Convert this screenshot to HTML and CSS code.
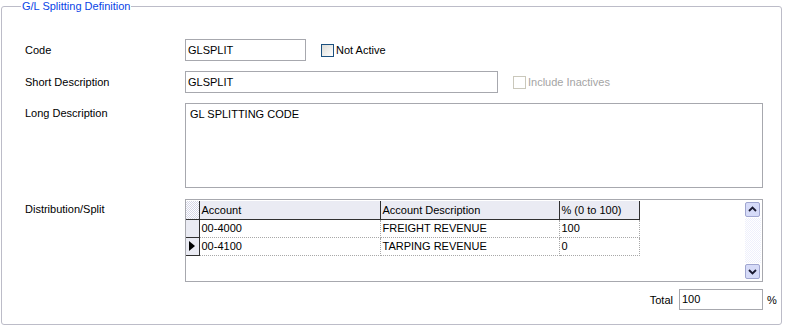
FILE: index.html
```html
<!DOCTYPE html>
<html lang="en">
<head>
  <meta charset="UTF-8" />
  <title>G/L Splitting Definition</title>
  <link rel="stylesheet" href="styles.css">
</head>
<body>
  <fieldset class="group">
    <legend class="group-title">G/L Splitting Definition</legend>

    <div class="row">
      <span class="label">Code</span>
      <div class="textbox code-box">GLSPLIT</div>
      <span class="check"><span class="check-box"></span>Not Active</span>
    </div>

    <div class="row row-short">
      <span class="label">Short Description</span>
      <div class="textbox short-box">GLSPLIT</div>
      <span class="check disabled"><span class="check-box"></span>Include Inactives</span>
    </div>

    <div class="row row-top row-long">
      <span class="label">Long Description</span>
      <div class="memo">GL SPLITTING CODE</div>
    </div>

    <div class="row row-top row-dist">
      <span class="label">Distribution/Split</span>
      <div class="grid">
        <table class="grid-table">
          <thead>
            <tr>
              <th class="corner"></th>
              <th class="col-account">Account</th>
              <th class="col-desc">Account Description</th>
              <th class="col-pct">% (0 to 100)</th>
            </tr>
          </thead>
          <tbody>
            <tr>
              <td class="rowhead"></td>
              <td>00-4000</td>
              <td>FREIGHT REVENUE</td>
              <td>100</td>
            </tr>
            <tr>
              <td class="rowhead current">
                <svg viewBox="0 0 6 10" class="pointer"><polygon points="0,0 6,5 0,10" /></svg>
              </td>
              <td>00-4100</td>
              <td>TARPING REVENUE</td>
              <td>0</td>
            </tr>
          </tbody>
        </table>
        <div class="grid-scroll">
          <div class="scroll-btn">
            <svg viewBox="0 0 13 13"><path d="M3 8l3.5-3.5L10 8" /></svg>
          </div>
          <div class="scroll-track"></div>
          <div class="scroll-btn">
            <svg viewBox="0 0 13 13"><path d="M3 5l3.5 3.5L10 5" /></svg>
          </div>
        </div>
      </div>
    </div>

    <div class="total-row">
      <span class="total-label">Total</span>
      <div class="textbox total-box">100</div>
      <span class="pct">%</span>
    </div>
  </fieldset>
</body>
</html>
```

FILE: styles.css
```css
body {
  margin: 0;
  background-color: #fff;
  color: #000;
  font-family: 'Liberation Sans', Arial, sans-serif;
  font-size: 11px;
}
.group {
  margin: 0 4px 0 1px;
  padding: 26px 4px 14px 23px;
  border: 1px solid #bcbcc8;
  border-radius: 3px;
  min-width: 0;
}
.group-title {
  color: #0a44e6;
  line-height: 13px;
  padding: 0 1px;
  margin-left: -4px;
}

.row {
  display: flex;
  align-items: center;
}
.row-top {
  align-items: flex-start;
}
.row-short {
  margin-top: 10px;
}
.row-long {
  margin-top: 10px;
}
.row-dist {
  margin-top: 11px;
}
.label {
  width: 160px;
  flex: none;
}
.row-top .label {
  padding-top: 4px;
}

.textbox {
  box-sizing: border-box;
  height: 22px;
  border: 1px solid #a7a8ae;
  padding: 0 2px;
  line-height: 20px;
  background: #fff;
}
.code-box {
  width: 121px;
}
.short-box {
  width: 313px;
}
.total-box {
  width: 84px;
  height: 21px;
  line-height: 19px;
}

.check {
  display: flex;
  align-items: center;
  gap: 2px;
  margin-left: 15px;
}
.check-box {
  box-sizing: border-box;
  width: 13px;
  height: 13px;
  border: 1px solid #1c5180;
  background: linear-gradient(135deg, #dcdcd7, #fff);
}
.check.disabled {
  color: #a4a4a4;
}
.check.disabled .check-box {
  border-color: #cac8bb;
  background: #fff;
}

.memo {
  box-sizing: border-box;
  width: 578px;
  height: 85px;
  border: 1px solid #a7a8ae;
  padding: 4px 4px;
}

.grid {
  box-sizing: border-box;
  width: 578px;
  height: 83px;
  border: 1px solid #a7a8ae;
  display: flex;
  padding-top: 1px;
}
.grid-table {
  border-collapse: collapse;
  align-self: flex-start;
}
.grid-table th,
.grid-table td {
  box-sizing: border-box;
  height: 18px;
  padding: 0 0 0 2px;
  text-align: left;
  font-weight: normal;
  white-space: nowrap;
}
.grid-table th {
  background: repeating-conic-gradient(#d5d6e6 0 25%, #fff 0 50%) 0 0 / 2px 2px;
  border-right: 1px solid #303030;
  border-bottom: 1px solid #303030;
}
.grid-table td {
  border-right: 1px dotted #a8a8a8;
  border-bottom: 1px dotted #a8a8a8;
}
.grid-table .corner,
.grid-table .rowhead {
  width: 13px;
  padding: 0;
  background: repeating-conic-gradient(#d5d6e6 0 25%, #fff 0 50%) 0 0 / 2px 2px;
  border-right: 1px solid #303030;
  border-bottom: 1px solid #303030;
}
.col-account {
  width: 181px;
}
.col-desc {
  width: 179px;
}
.col-pct {
  width: 80px;
}
.pointer {
  display: block;
  width: 6px;
  height: 10px;
  margin-left: 3px;
  fill: #000;
}

.grid-scroll {
  margin-left: auto;
  margin-right: 1px;
  width: 16px;
  display: flex;
  flex-direction: column;
  padding-top: 1px;
  padding-bottom: 2px;
}
.scroll-btn {
  box-sizing: border-box;
  width: 15px;
  height: 15px;
  border: 1px solid #a0a6d0;
  border-radius: 2px;
  background: #d6dbf8;
}
.scroll-btn svg {
  display: block;
  width: 13px;
  height: 13px;
  fill: none;
  stroke: #1a1a30;
  stroke-width: 1.8;
}
.scroll-track {
  flex: 1;
  margin: 1px 0;
  background: repeating-conic-gradient(#eef0fc 0 25%, #fff 0 50%) 0 0 / 2px 2px;
}

.total-row {
  display: flex;
  align-items: center;
  justify-content: flex-end;
  margin-top: 7px;
}
.total-label {
  margin-right: 6px;
}
.pct {
  width: 10px;
  margin-left: 4px;
}
```
